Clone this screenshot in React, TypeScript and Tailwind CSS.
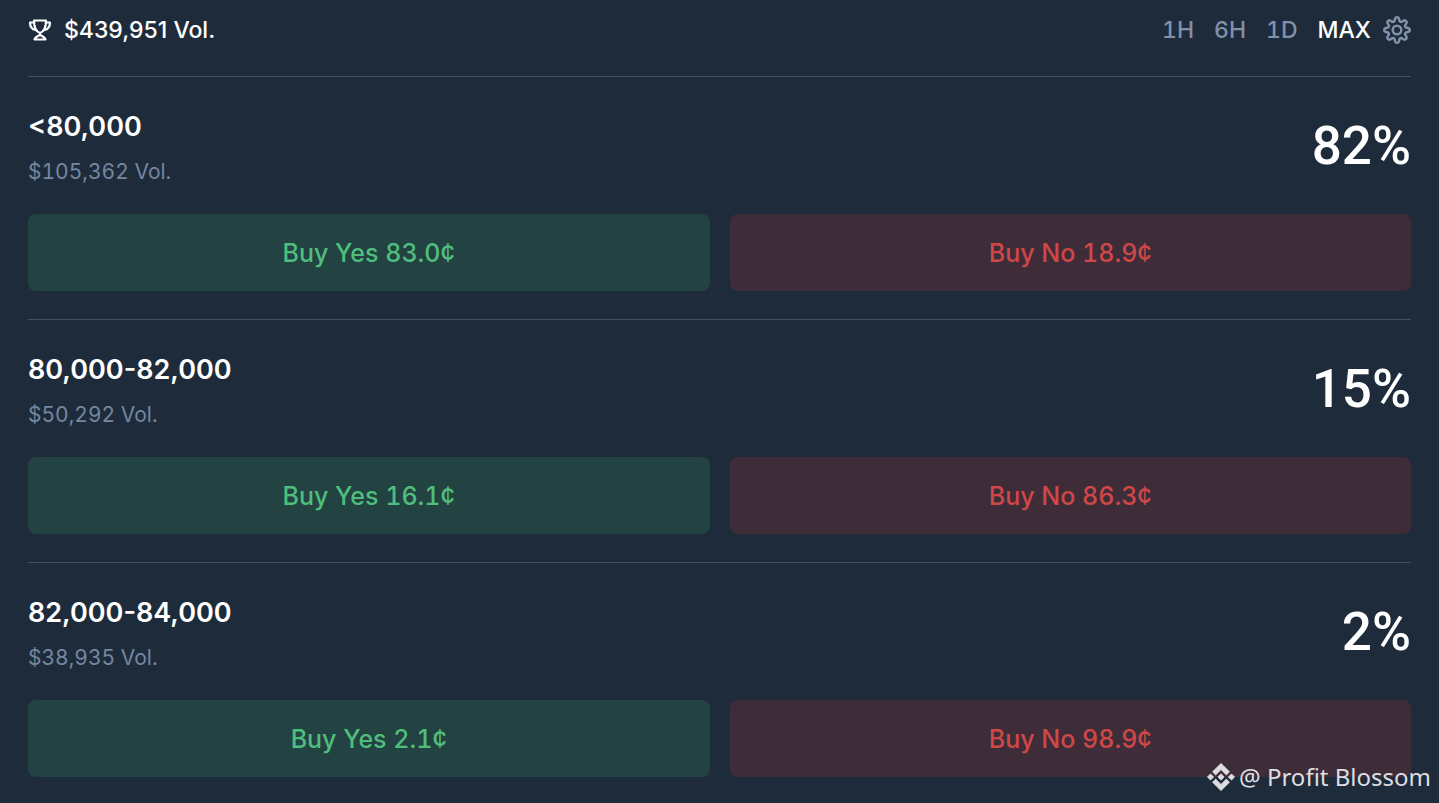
import { useState } from "react";

interface Market {
  title: string;
  volume: string;
  chance: string;
  yes: string;
  no: string;
}

const MARKETS: Market[] = [
  { title: "<80,000", volume: "$105,362 Vol.", chance: "82%", yes: "83.0¢", no: "18.9¢" },
  { title: "80,000-82,000", volume: "$50,292 Vol.", chance: "15%", yes: "16.1¢", no: "86.3¢" },
  { title: "82,000-84,000", volume: "$38,935 Vol.", chance: "2%", yes: "2.1¢", no: "98.9¢" },
];

const RANGES = ["1H", "6H", "1D", "MAX"];

// Eight rounded teeth: the radius swings between root and tip as a flattened wave.
function gearPath() {
  const points: string[] = [];
  for (let deg = 0; deg < 360; deg += 3) {
    const angle = (deg * Math.PI) / 180;
    const wave = Math.tanh(1.6 * Math.cos(8 * angle)) / Math.tanh(1.6);
    const radius = 10.8 + 1.9 * wave;
    const x = (14 + radius * Math.sin(angle)).toFixed(2);
    const y = (14 - radius * Math.cos(angle)).toFixed(2);
    points.push(`${x} ${y}`);
  }
  return `M${points.join("L")}Z`;
}

function TrophyIcon() {
  return (
    <svg viewBox="0 0 24 24" className="size-6" fill="none" stroke="currentColor" strokeWidth="2.2" strokeLinejoin="round" strokeLinecap="round" aria-hidden="true">
      <path d="M6 2.500h12c0 6-1.500 11-6 12.500C7.500 13.500 6 8.500 6 2.500Z" />
      <path d="M6 4.500H2c0 4.500 2 7 5.800 7.500M18 4.500h4c0 4.500-2 7-5.800 7.500" />
      <path d="M12 15v2M12 17c-2 .800-4.500 2-5.500 4.500h11C16.500 19 14 17.800 12 17Z" />
    </svg>
  );
}

function GearIcon() {
  return (
    <svg viewBox="0 0 28 28" className="size-7" fill="none" stroke="currentColor" strokeWidth="2.5" strokeLinejoin="round" aria-hidden="true">
      <path d={gearPath()} />
      <circle cx="14" cy="14" r="4.300" />
    </svg>
  );
}

function DiamondLogo() {
  return (
    <svg viewBox="-2 -2 130 130" className="size-7" fill="currentColor" stroke="currentColor" strokeWidth="4" strokeLinejoin="round" aria-hidden="true">
      <path d="M38.200 53.200 63 28.400l24.800 24.800 14.400-14.400L63 0 23.800 38.800Z" />
      <path d="m0 63 14.400-14.400L28.800 63 14.400 77.400Z" />
      <path d="M38.200 72.800 63 97.600l24.800-24.800 14.400 14.400L63 126 23.800 87.200Z" />
      <path d="M97.200 63l14.400-14.400L126 63l-14.400 14.400Z" />
      <path d="M63 48.400 77.600 63 63 77.600 48.400 63Z" />
    </svg>
  );
}

function MarketRow({ market }: { market: Market }) {
  return (
    <article className="border-t border-[#42505f] pt-8 pb-7 last-of-type:pb-6">
      <div className="flex items-center justify-between">
        <div>
          <h2 className="text-[27px] leading-9 font-semibold">{market.title}</h2>
          <p className="mt-3 text-[21px] leading-[29px] text-[#7486a0] tabular-nums">{market.volume}</p>
        </div>
        <span className="pb-1 font-[Roboto,sans-serif] text-[53px] leading-14 font-medium">{market.chance}</span>
      </div>
      <div className="mt-7 grid grid-cols-2 gap-5 text-[25px] font-medium tabular-nums">
        <button className="h-[77px] rounded-lg bg-[#234242] pt-0.5 text-[#4fbe7d]">Buy Yes {market.yes}</button>
        <button className="h-[77px] rounded-lg bg-[#3e2d39] pt-0.5 text-[#d04747]">Buy No {market.no}</button>
      </div>
    </article>
  );
}

export default function App() {
  const [range, setRange] = useState("MAX");

  return (
    <main className="relative min-h-screen bg-[#1e2b3a] px-7 font-[Inter,sans-serif] text-white">
      <header className="flex h-[76px] items-center justify-between pb-4 text-[23px] font-medium">
        <div className="flex items-center gap-3">
          <TrophyIcon />
          <span>$439,951 Vol.</span>
        </div>
        <div className="flex items-center gap-5 tabular-nums">
          {RANGES.map((r) => (
            <button key={r} onClick={() => setRange(r)} className={r === range ? "text-white" : "text-[#8191aa]"}>
              {r}
            </button>
          ))}
          <button aria-label="Settings" className="-ml-2 text-[#8191aa]">
            <GearIcon />
          </button>
        </div>
      </header>

      {MARKETS.map((market) => (
        <MarketRow key={market.title} market={market} />
      ))}

      <div className="absolute right-2 bottom-2.5 flex items-center gap-1 font-['Noto_Sans',sans-serif] text-2xl text-[#dedee2]">
        <DiamondLogo />
        <span>@ Profit Blossom</span>
      </div>
    </main>
  );
}
